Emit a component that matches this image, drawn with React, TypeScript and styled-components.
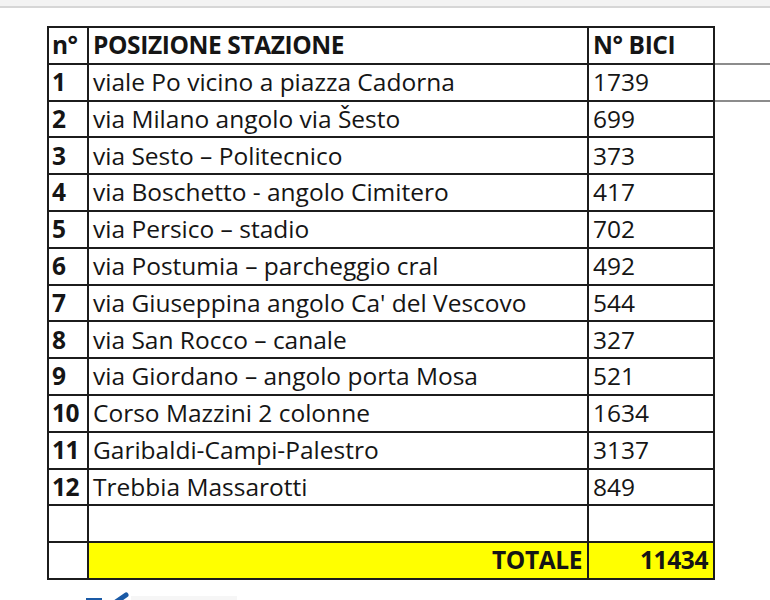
import React from "react";
import styled, { createGlobalStyle } from "styled-components";

const Global = createGlobalStyle`
  html, body { margin: 0; padding: 0; background: #ffffff; }
  body { font-family: "Open Sans", Lato, sans-serif; }
`;

const Page = styled.div`
  width: 770px;
  height: 600px;
  overflow: hidden;
  display: flex;
  flex-direction: column;
`;

const TopBar = styled.div`
  height: 6px;
  background: #f3f3f3;
  border-bottom: 2px solid #d6d6d6;
  flex: none;
`;

const Body = styled.div`
  display: flex;
  align-items: flex-start;
  padding: 18px 0 0 47px;
  flex: none;
`;

const Table = styled.table`
  border-collapse: collapse;
  table-layout: fixed;
  width: 668px;
  border: 2px solid #1c1c1c;
  font-family: "Open Sans", Lato, sans-serif;
  font-size: 24.5px;
  color: #151515;
`;

const Cell = styled.td<{ $bold?: boolean; $right?: boolean; $yellow?: boolean }>`
  border: 2px solid #1c1c1c;
  height: 34.8px;
  padding: 0 5px 0 4px;
  vertical-align: middle;
  white-space: nowrap;
  overflow: visible;
  font-weight: ${(p) => (p.$bold ? 700 : 400)};
  text-align: ${(p) => (p.$right ? "right" : "left")};
  background: ${(p) => (p.$yellow ? "#ffff00" : "transparent")};
  line-height: 1;
  letter-spacing: ${(p) => (p.$bold ? "-0.4px" : "0")};
`;

const NumCell = styled(Cell)`
  padding: 0 0 0 3px;
  letter-spacing: -0.6px;
`;

const Side = styled.div`
  display: flex;
  flex-direction: column;
  width: 56px;
  padding-top: 37px;
`;

const SideLine = styled.div<{ $gap?: number }>`
  height: 2px;
  background: #8c8c8c;
  margin-top: ${(p) => p.$gap ?? 0}px;
`;

const Footer = styled.div`
  display: flex;
  align-items: flex-end;
  padding: 12px 0 0 86px;
`;

const rows: [number, string, string][] = [
  [1, "viale Po vicino a piazza Cadorna", "1739"],
  [2, "via Milano angolo via Šesto", "699"],
  [3, "via Sesto – Politecnico", "373"],
  [4, "via Boschetto - angolo Cimitero", "417"],
  [5, "via Persico – stadio", "702"],
  [6, "via Postumia – parcheggio cral", "492"],
  [7, "via Giuseppina angolo Ca' del Vescovo", "544"],
  [8, "via San Rocco – canale", "327"],
  [9, "via Giordano – angolo porta Mosa", "521"],
  [10, "Corso Mazzini 2 colonne", "1634"],
  [11, "Garibaldi-Campi-Palestro", "3137"],
  [12, "Trebbia Massarotti", "849"],
];

export default function App() {
  return (
    <Page>
      <Global />
      <TopBar />
      <Body>
        <Table>
          <colgroup>
            <col style={{ width: 40 }} />
            <col style={{ width: 500 }} />
            <col style={{ width: 126 }} />
          </colgroup>
          <tbody>
            <tr>
              <NumCell $bold>n°</NumCell>
              <Cell $bold>POSIZIONE STAZIONE</Cell>
              <Cell $bold>N° BICI</Cell>
            </tr>
            {rows.map(([n, name, count]) => (
              <tr key={n}>
                <NumCell $bold>{n}</NumCell>
                <Cell>{name}</Cell>
                <Cell>{count}</Cell>
              </tr>
            ))}
            <tr>
              <Cell />
              <Cell />
              <Cell />
            </tr>
            <tr>
              <Cell />
              <Cell $bold $right $yellow>TOTALE</Cell>
              <Cell $bold $right $yellow>11434</Cell>
            </tr>
          </tbody>
        </Table>
        <Side>
          <SideLine />
          <SideLine $gap={35} />
        </Side>
      </Body>
      <Footer>
        <svg width="160" height="12" viewBox="0 0 160 12">
          <rect x="45" y="4" width="106" height="8" fill="#f6f6f6" />
          <rect x="0" y="6" width="16" height="6" fill="#1a5aa6" />
          <path d="M27 12 L40 3" stroke="#1a5aa6" strokeWidth="5" strokeLinecap="round" />
        </svg>
      </Footer>
    </Page>
  );
}
